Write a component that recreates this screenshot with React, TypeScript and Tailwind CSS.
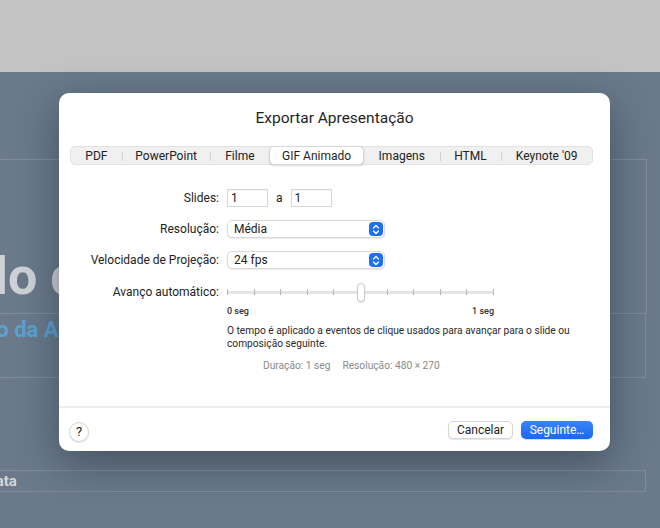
const font = "font-['Roboto','Liberation_Sans',sans-serif]";

const tabs = [
  { label: "PDF", w: "w-[51px]" },
  { label: "PowerPoint", w: "w-[89px]" },
  { label: "Filme", w: "w-[59px]" },
  { label: "GIF Animado", w: "w-[95px]", active: true },
  { label: "Imagens", w: "w-[76px]" },
  { label: "HTML", w: "w-[62px]" },
  { label: "Keynote '09", w: "w-[91px]" },
];

function Stepper() {
  return (
    <span className="flex h-[14px] w-[14px] items-center justify-center rounded-[4px] bg-[#1f6ff2]">
      <svg width="8" height="11" viewBox="0 0 8 11" fill="none">
        <path d="M1.5 4 L4 1.5 L6.5 4" stroke="white" strokeWidth="1.3" strokeLinecap="round" strokeLinejoin="round" />
        <path d="M1.5 7 L4 9.5 L6.5 7" stroke="white" strokeWidth="1.3" strokeLinecap="round" strokeLinejoin="round" />
      </svg>
    </span>
  );
}

function Select({ value }: { value: string }) {
  return (
    <div className="flex h-[18px] w-[158px] items-center justify-between rounded-[5px] border border-[#d9d9d9] bg-white pl-[6px] pr-[1px] shadow-[0_1px_1px_rgba(0,0,0,0.08)]">
      <span className="text-[12px] leading-none text-[#222]">{value}</span>
      <Stepper />
    </div>
  );
}

function Row({ label, children }: { label: string; children: React.ReactNode }) {
  return (
    <div className="flex h-[18px] items-center gap-[8px]">
      <span className="w-[160px] text-right text-[12px] text-[#232323]">{label}</span>
      {children}
    </div>
  );
}

function NumberBox({ value }: { value: string }) {
  return (
    <div className="flex h-[18px] w-[41px] items-center border border-[#d6d6d6] bg-white pl-[3px] text-[12px] text-[#222] shadow-[inset_0_1px_0_rgba(0,0,0,0.04)]">
      {value}
    </div>
  );
}

function Slider() {
  const ticks = Array.from({ length: 11 }, (_, i) => i);
  return (
    <div className="relative h-[18px] w-[267px]">
      <div className="absolute left-0 right-0 top-[8px] h-[3px] rounded-full bg-[#e4e4e4]" />
      {ticks.map((i) =>
        i === 5 ? null : (
          <div
            key={i}
            className="absolute top-[6px] h-[6px] w-px bg-[#b5b5b5]"
            style={{ left: `${i * 26.6}px` }}
          />
        )
      )}
      <div className="absolute left-[130px] top-0 h-[19px] w-[8px] rounded-full border border-[#c9c9c9] bg-white shadow-[0_1px_1px_rgba(0,0,0,0.12)]" />
    </div>
  );
}

export default function App() {
  return (
    <div className={`relative flex h-[528px] w-[660px] flex-col overflow-hidden ${font}`}>
      <div className="h-[72px] bg-[#c2c3c2]" />

      {/* slide behind the sheet */}
      <div className="flex flex-1 flex-col bg-[#6a7a8b] pt-[87px]">
        <div className="ml-[-20px] mr-[13px] flex h-[155px] items-end overflow-hidden border border-white/15 pb-[10px]">
          <span className="ml-[-80px] whitespace-nowrap text-[52px] font-bold leading-none text-[#cfd2d5]">
            Título do Slide
          </span>
        </div>
        <div className="ml-[-20px] mr-[14px] h-[64px] overflow-hidden border-x border-b border-white/15 pt-[5px]">
          <span className="ml-[-62px] whitespace-nowrap text-[22px] font-bold leading-none text-[#5aa2d4]">
            Subtítulo da Apresentação
          </span>
        </div>
        <div className="ml-[-20px] mr-[14px] mt-[92px] flex h-[22px] items-center overflow-hidden border border-white/15">
          <span className="ml-[5px] whitespace-nowrap text-[15px] font-bold text-[#d3d6d9]">Data</span>
        </div>
      </div>

      {/* export sheet */}
      <div className="absolute left-[59px] top-[93px] flex h-[358px] w-[551px] flex-col overflow-hidden rounded-[10px] bg-white shadow-[0_12px_40px_rgba(20,30,45,0.45)]">
        <div className="pt-[15px] text-center text-[15.5px] leading-[20px] text-[#1f1f1f]">Exportar Apresentação</div>

        <div className="mx-[11px] mt-[18px] flex h-[19px] w-[523px] items-center rounded-[5px] border border-[#e2e2e2] bg-[#f0f0f0]">
          {tabs.map((t, i) => {
            const prev = tabs[i - 1];
            const sep = i > 0 && !t.active && !prev?.active;
            return (
              <div key={t.label} className={`relative flex h-full items-center justify-center ${t.w}`}>
                {sep && <span className="absolute left-0 top-[5px] h-[9px] w-px bg-[#d2d2d2]" />}
                {t.active ? (
                  <span className="flex h-[19px] w-full items-center justify-center rounded-[5px] border border-[#d7d7d7] bg-white text-[12px] text-[#1f1f1f] shadow-[0_1px_2px_rgba(0,0,0,0.15)]">
                    {t.label}
                  </span>
                ) : (
                  <span className="text-[12px] text-[#222]">{t.label}</span>
                )}
              </div>
            );
          })}
        </div>

        <div className="mt-[24px] flex flex-col gap-[13px]">
          <Row label="Slides:">
            <NumberBox value="1" />
            <span className="text-[12px] text-[#222]">a</span>
            <NumberBox value="1" />
          </Row>
          <Row label="Resolução:">
            <Select value="Média" />
          </Row>
          <Row label="Velocidade de Projeção:">
            <Select value="24 fps" />
          </Row>
        </div>

        <div className="mt-[14px]">
          <Row label="Avanço automático:">
            <Slider />
          </Row>
        </div>

        <div className="ml-[168px] mt-[4px] flex w-[267px] justify-between text-[9px] font-medium leading-[12px] text-[#333]">
          <span>0 seg</span>
          <span>1 seg</span>
        </div>

        <p className="ml-[168px] mt-[7px] whitespace-nowrap text-[10.2px] leading-[13px] text-[#2a2a2a]">
          O tempo é aplicado a eventos de clique usados para avançar para o slide ou
          <br />
          composição seguinte.
        </p>

        <div className="ml-[204px] mt-[9px] flex gap-[12px] text-[10.2px] leading-[14px] text-[#8a8a8a]">
          <span>Duração: 1 seg</span>
          <span>Resolução: 480 × 270</span>
        </div>

        <div className="flex-1" />

        <div className="h-[2px] bg-[#ececec]" />
        <div className="flex h-[43px] items-center justify-between pl-[10px] pr-[17px]">
          <span className="mt-[5px] flex h-[20px] w-[20px] items-center justify-center rounded-full border border-[#d6d6d6] bg-white text-[13px] text-[#222] shadow-[0_1px_1px_rgba(0,0,0,0.12)]">
            ?
          </span>
          <div className="flex items-center gap-[8px]">
            <button className="flex h-[18px] w-[65px] items-center justify-center rounded-[5px] border border-[#d6d6d6] bg-white text-[12px] text-[#222] shadow-[0_1px_1px_rgba(0,0,0,0.1)]">
              Cancelar
            </button>
            <button className="flex h-[18px] w-[72px] items-center justify-center rounded-[5px] bg-gradient-to-b from-[#3a84f7] to-[#1868f0] text-[12px] text-white shadow-[0_1px_1px_rgba(0,0,0,0.15)]">
              Seguinte…
            </button>
          </div>
        </div>
      </div>
    </div>
  );
}
